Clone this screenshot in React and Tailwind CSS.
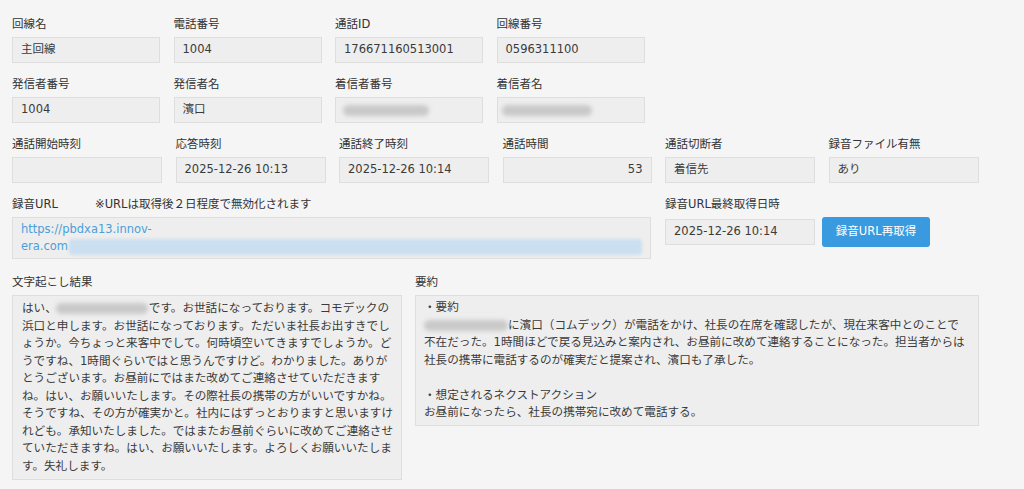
import React from 'react';

const font = "font-['DejaVu_Sans','Noto_Sans_CJK_JP',sans-serif]";

const Blur = ({ w, className = '' }) => (
  <span className={`inline-block h-[11px] rounded-full bg-[#c9c9c9] blur-[2px] align-middle ${className}`} style={{ width: w }} />
);

const Field = ({ label, value, width, right, children }) => (
  <div style={{ width }}>
    <div className="h-[17px] leading-[17px] text-[#333]">{label}</div>
    <div
      className={`mt-[4px] flex h-[26px] items-center border border-[#dedede] bg-[#eeeeee] px-[8px] text-[#3a3a3a] ${
        right ? 'justify-end' : ''
      }`}
    >
      {children || value}
    </div>
  </div>
);

const transcript = [
  null,
  '浜口と申します。お世話になっております。ただいま社長お出すきでし',
  'ょうか。今ちょっと来客中でして。何時頃空いてきますでしょうか。ど',
  'うですね、1時間ぐらいではと思うんですけど。わかりました。ありが',
  'とうございます。お昼前にではまた改めてご連絡させていただきます',
  'ね。はい、お願いいたします。その際社長の携帯の方がいいですかね。',
  'そうですね、その方が確実かと。社内にはずっとおりますと思いますけ',
  'れども。承知いたしました。ではまたお昼前ぐらいに改めてご連絡させ',
  'ていただきますね。はい、お願いいたします。よろしくお願いいたしま',
  'す。失礼します。',
];

export default function App() {
  return (
    <div className={`min-h-[489px] bg-[#f5f5f5] px-[12px] pt-[16px] text-[11.5px] ${font}`}>
      {/* row 1 */}
      <div className="flex gap-[13.5px]">
        <Field label="回線名" value="主回線" width={148} />
        <Field label="電話番号" value="1004" width={148} />
        <Field label="通話ID" value="176671160513001" width={148} />
        <Field label="回線番号" value="0596311100" width={148} />
      </div>

      {/* row 2 */}
      <div className="mt-[13px] flex gap-[13.5px]">
        <Field label="発信者番号" value="1004" width={148} />
        <Field label="発信者名" value="濱口" width={148} />
        <Field label="着信者番号" width={148}>
          <Blur w={86} className="-ml-[1px]" />
        </Field>
        <Field label="着信者名" width={148}>
          <Blur w={90} className="-ml-[4px]" />
        </Field>
      </div>

      {/* row 3 */}
      <div className="mt-[13px] flex gap-[13.5px]">
        <Field label="通話開始時刻" value="" width={150} />
        <Field label="応答時刻" value="2025-12-26 10:13" width={150} />
        <Field label="通話終了時刻" value="2025-12-26 10:14" width={150} />
        <Field label="通話時間" value="53" width={149} right />
        <Field label="通話切断者" value="着信先" width={150} />
        <Field label="録音ファイル有無" value="あり" width={150} />
      </div>

      {/* row 4 */}
      <div className="mt-[13px] flex gap-[14px]">
        <div className="w-[639px]">
          <div className="flex h-[17px] leading-[17px] text-[#333]">
            <span className="w-[83px]">録音URL</span>
            <span>※URLは取得後２日程度で無効化されます</span>
          </div>
          <div className="mt-[4px] h-[42px] border border-[#dedede] bg-[#eeeeee] px-[8px] pt-[3px] leading-[17px] text-[#4a9fd9]">
            <div>https://pbdxa13.innov-</div>
            <div className="flex items-center">
              <span>era.com</span>
              <span className="ml-[1px] inline-block h-[16px] w-[576px] rounded-sm bg-[#cbdff0] blur-[1.5px]" />
            </div>
          </div>
        </div>
        <div>
          <div className="h-[17px] leading-[17px] text-[#333]">録音URL最終取得日時</div>
          <div className="mt-[4px] flex items-center gap-[7px]">
            <div className="flex h-[26px] w-[150px] items-center border border-[#dedede] bg-[#eeeeee] px-[8px] text-[#3a3a3a]">
              2025-12-26 10:14
            </div>
            <button className="h-[30px] w-[108px] rounded-[3px] bg-[#3a9ae0] text-white">録音URL再取得</button>
          </div>
        </div>
      </div>

      {/* row 5 */}
      <div className="mt-[15px] flex items-start gap-[13px]">
        <div className="w-[390px]">
          <div className="h-[17px] leading-[17px] text-[#333]">文字起こし結果</div>
          <div className="mt-[4px] whitespace-nowrap border border-[#dedede] bg-[#eeeeee] px-[9px] py-[4px] text-[11.6px] leading-[17.5px] text-[#3a3a3a]">
            {transcript.map((line, i) =>
              line === null ? (
                <div key={i} className="flex items-center">
                  <span>はい、</span>
                  <Blur w={92} className="ml-[-1px] mr-[1px]" />
                  <span>です。お世話になっております。コモデックの</span>
                </div>
              ) : (
                <div key={i}>{line}</div>
              )
            )}
          </div>
        </div>
        <div className="w-[564px]">
          <div className="h-[17px] leading-[17px] text-[#333]">要約</div>
          <div className="mt-[4px] whitespace-nowrap border border-[#dedede] bg-[#eeeeee] px-[8px] py-[3px] text-[11.6px] leading-[17.5px] text-[#3a3a3a]">
            <div>・要約</div>
            <div className="flex items-center">
              <Blur w={84} />
              <span>に濱口（コムデック）が電話をかけ、社長の在席を確認したが、現在来客中とのことで</span>
            </div>
            <div>不在だった。1時間ほどで戻る見込みと案内され、お昼前に改めて連絡することになった。担当者からは</div>
            <div>社長の携帯に電話するのが確実だと提案され、濱口も了承した。</div>
            <div className="h-[17.5px]" />
            <div>・想定されるネクストアクション</div>
            <div>お昼前になったら、社長の携帯宛に改めて電話する。</div>
          </div>
        </div>
      </div>
    </div>
  );
}
